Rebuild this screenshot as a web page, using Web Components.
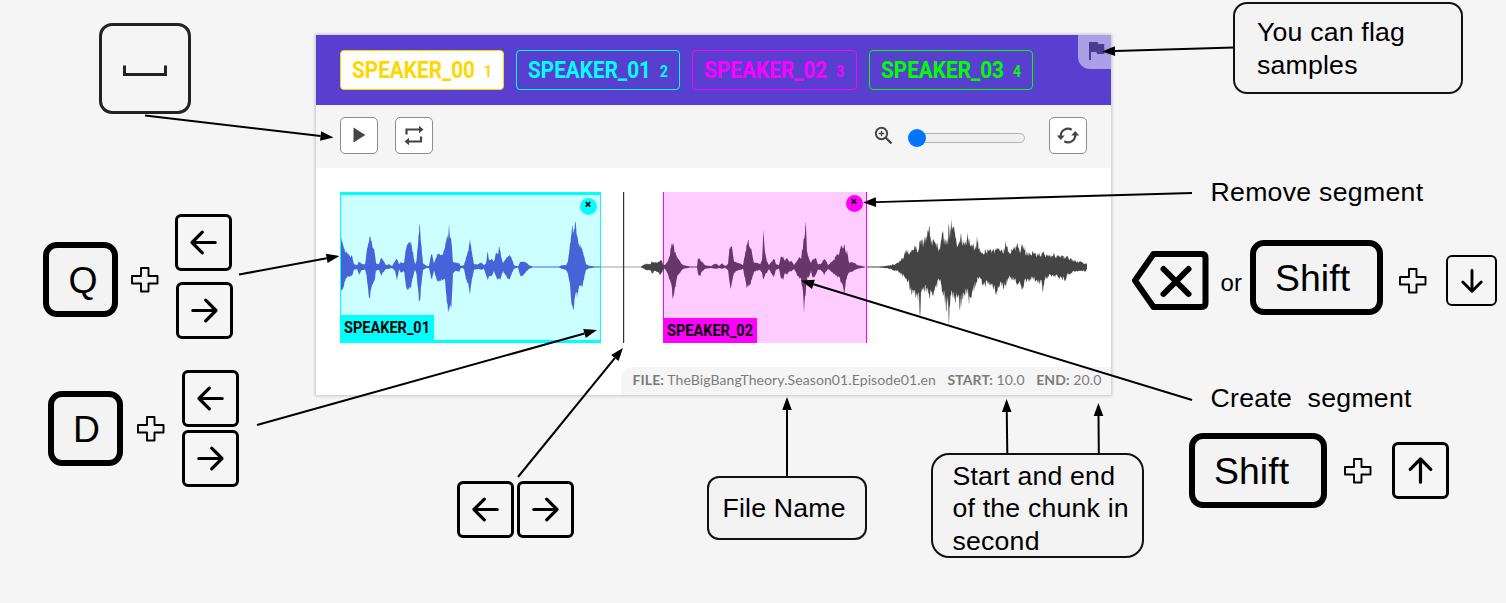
<!DOCTYPE html>
<html lang="en">
<head>
<meta charset="utf-8">
<title>Speaker annotation guide</title>
<style>
html,body{margin:0;background:#f5f5f5;overflow:hidden}
body{width:1506px;height:603px}
</style>
</head>
<body>
<help-canvas></help-canvas>
<script>
function define(name, html, setup) {
  customElements.define(name, class extends HTMLElement {
    connectedCallback() {
      if (this.shadowRoot) return;
      const t = document.createElement('template');
      t.innerHTML = typeof html === 'function' ? html(this) : html;
      this.attachShadow({mode: 'open'}).appendChild(t.content.cloneNode(true));
      if (setup) setup(this.shadowRoot, this);
    }
  });
}

/* Bold condensed lettering: text, size and set width */
define('condensed-text', el => {
  const s = +el.getAttribute('size'), w = +el.getAttribute('width');
  return `<style>:host{display:block;width:${w}px;height:${s}px;flex:none}
  span{display:block;width:max-content;transform-origin:0 0;white-space:nowrap;font:700 ${s}px/${s}px Roboto,sans-serif}</style><span>${el.getAttribute('text')}</span>`;
}, (root, el) => {
  const span = root.querySelector('span');
  span.style.transform = `scaleX(${el.getAttribute('width') / span.getBoundingClientRect().width})`;
});

define('speaker-chip', el => `<style>
:host{display:flex;box-sizing:border-box;width:var(--w,164px);height:40px;border:1.5px solid var(--c);border-radius:4px;color:var(--c);padding:8px 0 0 11px;gap:8.5px;align-items:flex-start}
:host([active]){background:#fff}
.n{padding-top:5px}
</style><condensed-text size="23" width="123" text="${el.getAttribute('name')}"></condensed-text>
<condensed-text class="n" size="16" width="8" text="${el.getAttribute('hotkey')}"></condensed-text>`);

define('tool-button', `<style>
:host{display:flex;box-sizing:border-box;width:38px;height:37px;border:1.5px solid #8c8c8c;border-radius:5px;background:#fff;align-items:center;justify-content:center}
</style><slot></slot>`);

define('zoom-slider', `<style>
:host{display:flex;align-items:center;width:117px;height:18px}
.track{box-sizing:border-box;flex:1;height:9.5px;margin-left:4px;border:1px solid #b2b2b2;border-radius:5px;background:#efefef;display:flex;align-items:center}
.thumb{width:18px;height:18px;border-radius:50%;background:#0075ff;margin-left:-5px;flex:none}
</style><div class="track"><div class="thumb"></div></div>`);

/* Envelope samples: x, height above the axis, depth below it */
const FIRST = [341,29,25,343,25,24,345,17,14,348,15,10,350,11,10,352,12,9,354,3,3,357,2,2,359,6,8,362,3,3,365,3,3,366.5,14,8,368,25,22,369.5,31,36,371,28,26,373,19,17,374.5,17,15,376,4,4,379,3,3,381,10,9,383,8,6,386,2,2,389,3,2,392,1,1,395,6,4,397,9,14,399,3,3,401,5,6,404,4,4,406,21,22,408,25,25,409,28,24,411,26,22,413,15,10,415,3,3,416.5,7,7,418,26,24,419.5,45,39,421,27,22,423,4,3,427,1,1,429,1,1,431,14,11,432,15,13,434,4,4,437,13,14,440,13,15,443,14,14,445,21,12,446.5,28,33,448,32,44,449,45,46,450,34,38,451.5,27,43,453,5,7,456,5,4,459,4,5,461,1,1,464,2,2,466,10,13,468,16,17,470,28,27,472,14,13,474,3,3,478,3,2,481,5,3,484,2,2,486,4,8,487.5,17,14,489,7,10,492,8,9,494,6,5,496,14,10,498,14,13,499.5,23,13,501,12,11,503,4,4,505,8,8,508,11,13,510,13,12,512,8,6,514,2,2,518,0.5,0.5,520,5,9,523,6,10,526,5,5,529,2,2,533,0.4,0.4,559,0.4,0.4,562,2,2,566,2,3,568,6,7,570,23,20,572,41,42,573.5,40,42,575.5,47,29,577,35,30,578.5,25,23,580,22,18,582,20,22,584,12,12,586,3,3,589,1.5,1.5,595,0.5,0.5,600,0.4,0.4];
const SECOND = [600,.4,.4,616,.3,1,625,.3,.5,641,.3,.5,644,3,2,647,4,4,650,3,3,652,6,7,655,5,4,658,6,6,661,8,9,663,3,3,665,2,2,668,7,8,670,14,15,671.5,27,20,672.5,25,33,673.5,24,30,675,16,24,677,11,10,680,6,6,683,2,2,690,.6,.6,697,.4,.4,698,9,8,700,8,10,702,6,5,705,2,2,711,1,1,716,4,2,719,1,1,722,4,2,725,1,1,728,3,3,729.5,21,18,730.5,22,24,732,22,17,734,6,7,737,5,4,740,4,3,743,2,2,745,13,12,746.5,22,20,748,31,20,749.5,23,21,751.5,17,14,754,5,5,757,5,4,760,3,3,762,7,6,763.5,36,14,765,17,9,767,6,6,769,2,2,772,6,8,774,10,10,776,3,3,779,2,2,781,13,12,783,10,13,785,7,7,787,10,8,789,6,5,792,6,4,794,2,2,797,6,8,799,11,12,801,10,12,803,23,28,804,33,46,805,37,35,805.8,52,24,807,18,13,809,9,10,811,5,5,813,8,12,816,9,8,818,3,3,821,3,3,824,9,8,826,7,5,828,2,2,831,5,5,834,8,7,836,12,9,839,15,11,841,21,15,843,19,20,844,25,31,846,15,15,847,18,12,849,5,6,852,5,5,854,5,4,857,2,2,862,1,1,865,.4,.4];
const THIRD = [867,.5,.5,880,.6,.6,888,1.5,1.5,895,3,4,899,5,6,902,9,9,906,19,13,909,17,19,911,18,28,914,22,25,917,20,37,918.5,22,30,920,25,49,921.5,27,25,925,30,26,927,30,24,928.5,50,26,930,32,30,932,30,34,935,31,28,939,20,13,941,30,18,942,46,26,944,33,30,946,26,43,948,30,36,949,52,56,950,36,38,951.5,57,31,953,38,30,955,45,35,957,27,30,960,34,43,962,32,34,964,24,28,966,24,28,967.500,41,31,969,30,38,970,26,34,972,21,27,975,23,20,977.5,31,14,979,20,12,982,18,18,984,17,20,986,17,18,990,20,19,994,18,22,997,19,29,999,18,20,1002,21,19,1004,19,22,1006,29,20,1008,19,13,1011,16,11,1012,24,14,1015,19,14,1017,24,19,1020,19,20,1022,21,25,1024,22,18,1026,16,14,1030,15,14,1034,16,13,1038,13,16,1041,15,16,1043,15,24,1045,12,13,1048,14,12,1050,13,10,1054,14,10,1058,11,11,1062,12,12,1065,10,15,1067,11,9,1070,9,7,1074,7,5,1078,6,5,1082,5,4,1085,4,5,1087,3,2];
function envelope(a, noise) {
  let up = [], down = [], seed = 7;
  const rnd = () => (seed = (seed * 16807) % 2147483647) / 2147483647;
  let i = 0;
  for (let x = a[0]; x <= a[a.length - 3]; x += .5) {
    while (i < a.length - 6 && a[i + 3] < x) i += 3;
    const f = (x - a[i]) / (a[i + 3] - a[i]);
    const u = a[i + 1] + (a[i + 4] - a[i + 1]) * f, d = a[i + 2] + (a[i + 5] - a[i + 2]) * f;
    up.push(x.toFixed(2) + ' ' + (75 - Math.max(.4, u * (1 + noise * (.2 - rnd())))).toFixed(2));
    down.unshift(x.toFixed(2) + ' ' + (75 + Math.max(.4, d * (1 + noise * (.2 - rnd())))).toFixed(2));
  }
  return 'M' + up.concat(down).join('L') + 'Z';
}

define('wave-region', el => `<style>
:host{display:flex;box-sizing:border-box;position:absolute;top:0;height:151px;align-items:flex-end;background:var(--fill);border:solid var(--c);border-width:var(--bw)}
.label{display:flex;box-sizing:border-box;width:92.500px;height:var(--lh);background:var(--c);padding:var(--lp) 0 0 3px;margin-bottom:var(--mb,0);color:#000}
.x{position:absolute;right:var(--xr);top:var(--xt);width:17px;height:17px;border-radius:50%;background:var(--c)}
.x svg{display:block}
</style><div class="label"><condensed-text size="16" width="86" text="${el.getAttribute('name')}"></condensed-text></div>
<div class="x"><svg width="17" height="17"><path d="M5.7 4l4.6 4.600M10.300 4l-4.600 4.600" stroke="#000" stroke-width="1.700"/></svg></div>`);

define('wave-form', `<style>
:host{display:block;position:relative;width:747px;height:151px}
svg{position:absolute;left:0;top:0;overflow:visible}
.a{left:0;width:261px;--c:#0ff;--fill:#cff;--bw:3px 1.300px;--lh:28.500px;--lp:5px;--mb:-3px;--xr:3px;--xt:3px}
.b{left:323px;width:204px;--c:#f0f;--fill:#fcf;--bw:0 1.300px;--lh:25px;--lp:5px;--xr:3px;--xt:3px}
</style>
<wave-region class="a" name="SPEAKER_01"></wave-region>
<wave-region class="b" name="SPEAKER_02"></wave-region>
<svg width="747" height="151" viewBox="340 0 747 151"><path id="w1" fill="#4664d8"/><path id="w2" fill="#444"/><path id="w2b" fill="#693669"/><path id="w3" fill="#444"/><path d="M623.600 0v151" stroke="#333" stroke-width="1.200"/></svg>`,
root => {
  const q = id => root.getElementById(id);
  const quiet = SECOND.indexOf(641), cut = SECOND.indexOf(665);
  q('w1').setAttribute('d', envelope(FIRST, .2));
  q('w2').setAttribute('d', 'M600 74.700h42v.6h-42z' + envelope(SECOND.slice(quiet, cut + 3), .4));
  q('w2b').setAttribute('d', envelope(SECOND.slice(cut), .25));
  q('w3').setAttribute('d', envelope(THIRD, .4));
});

define('audio-panel', `<style>
:host{display:flex;flex-direction:column;box-sizing:border-box;width:795px;height:360px;background:#fff;box-shadow:0 0 3px 1px rgba(0,0,0,.2);font-family:Lato,sans-serif}
header{display:flex;gap:12px;height:70px;box-sizing:border-box;padding:15px 0 0 24px;background:#583fcf;position:relative;flex:none}
.flag{position:absolute;right:0;top:0;width:33px;height:34px;border-bottom-left-radius:12px;background:#ab9fe7}
.flag svg{display:block}
nav{display:flex;align-items:flex-start;box-sizing:border-box;height:63px;padding:12px 24px 0 23.500px;background:#f5f5f5;flex:none}
nav .loop{margin-left:17.500px}.mag{margin:9px 15px 0 auto}zoom-slider{margin:12px 24.500px 0 0}
main{padding:24px 0 0 24px;height:175px;flex:1;box-sizing:border-box}
footer{display:flex;align-self:flex-end;box-sizing:border-box;width:490px;height:28px;padding:0 12.500px 0 11.500px;border-top-left-radius:12px;background:#f5f5f5;gap:11.500px;align-items:flex-start;color:#7b7b7b;font-size:14px;line-height:26px;letter-spacing:.1px;white-space:nowrap}
b{font-weight:700}
</style>
<header>
<speaker-chip active name="SPEAKER_00" hotkey="1" style="--c:#ffd700"></speaker-chip>
<speaker-chip name="SPEAKER_01" hotkey="2" style="--c:#0ff"></speaker-chip>
<speaker-chip name="SPEAKER_02" hotkey="3" style="--c:#f0f;--w:165px"></speaker-chip>
<speaker-chip name="SPEAKER_03" hotkey="4" style="--c:#0f0"></speaker-chip>
<div class="flag"><svg width="33" height="34"><path d="M11 7h8.500l.8 2h6v10h-7l-.9-2H13v8h-2z" fill="#4b3c91"/></svg></div>
</header>
<nav>
<tool-button><svg width="20" height="20"><path d="M4.500 1.500v15L16.300 9z" fill="#444"/></svg></tool-button>
<tool-button class="loop"><svg width="20" height="20" viewBox="0 1 20 20" fill="none" stroke="#444" stroke-width="2.200"><path d="M2.500 9.500V4.500h14M17 11.500v5H4"/><path d="M15 .8l4.500 3.700L15 8.200zM5 12.800L.5 16.500 5 20.200z" fill="#444" stroke="none"/></svg></tool-button>
<svg class="mag" width="19" height="19" fill="none" stroke="#444"><circle cx="7.500" cy="7.500" r="5.700" stroke-width="1.900"/><path d="M4.700 7.500h5.600M7.500 4.700v5.600" stroke-width="1.300"/><path d="M11.500 11.500l6 6" stroke-width="2.300"/></svg>
<zoom-slider></zoom-slider>
<tool-button><svg width="24" height="20" viewBox="0 1 24 20" fill="none" stroke="#444" stroke-width="2.200"><path d="M4.700 11a7.300 7.300 0 0 1 11-6.300M19.300 10a7.300 7.300 0 0 1-11 6.300"/><path d="M.8 10.500h8l-4 4.500zM23.200 10.500h-8l4-4.500z" fill="#444" stroke="none"/></svg></tool-button>
</nav>
<main><wave-form></wave-form></main>
<footer><span><b>FILE:</b> TheBigBangTheory.Season01.Episode01.en</span><span><b>START:</b> 10.0</span><span><b>END:</b> 20.0</span></footer>`);

define('key-cap', `<style>
:host{display:block;box-sizing:border-box;border:6px solid #000;border-radius:14px;background:#f3f3f3;font:37.330px/43px "Liberation Sans",Arial,sans-serif;color:#000;white-space:nowrap}
</style><slot></slot>`);

define('arrow-key', el => `<style>
:host{display:flex;box-sizing:border-box;width:57px;height:57px;border:3px solid #000;border-radius:6px;align-items:center;justify-content:center}
:host([small]){width:51px;height:51px;border-width:2.500px}
svg{flex:none;transform:rotate(${{left: 0, up: 90, right: 180, down: -90}[el.getAttribute('dir')]}deg)}
:host([small]) svg{width:26px;height:26px}
</style><svg width="29" height="29" viewBox="0 0 29 29" fill="none" stroke="#000" stroke-width="3.200" stroke-linecap="round" stroke-linejoin="round"><path d="M26.200 14.500H3M13.300 4.200L3 14.500l10.300 10.300"/></svg>`);

define('plus-sign', `<style>:host{display:block;width:28px;height:26px}svg{display:block}</style>
<svg width="28" height="26"><path d="M10 1h7.500v8h9v7.500h-9v8H10v-8H1V9h9z" fill="#f3f3f3" stroke="#000" stroke-width="1.900" stroke-linejoin="round"/></svg>`);

define('note-box', `<style>
:host{display:block;box-sizing:border-box;border:2px solid #111;border-radius:14px;background:#f3f3f3;font:26.670px/32.500px "Liberation Sans",Arial,sans-serif;letter-spacing:.2px;color:#000;white-space:pre}
:host([plain]){border:0;background:none}
</style><slot></slot>`);

define('arrow-lines', `<style>:host{display:block;position:absolute;left:0;top:0}svg{display:block}</style>
<svg width="1506" height="603"></svg>`, root => {
  const list = [[145,115.5,333.5,137.5],[239,274.5,339.5,256],[257,425,597,330],[518,477,623,348],[787,476,787,397],[1007.3,454,1006.6,399],[1098.8,454,1098.4,403],[1192,193,863,202.5],[1192,400,801,280.5],[1234,47.5,1102,51.5]];
  root.querySelector('svg').innerHTML = list.map(([a, b, c, d]) => {
    const n = Math.hypot(c - a, d - b), u = (c - a) / n, v = (d - b) / n, x = c - 13 * u, y = d - 13 * v;
    return `<path d="M${a} ${b}L${x} ${y}" stroke="#000" stroke-width="2"/><path d="M${c} ${d}L${x - 4.8 * v} ${y + 4.8 * u}L${x + 4.8 * v} ${y - 4.8 * u}Z"/>`;
  }).join('');
});

/* Free canvas holding the panel, its notes and the keys */
const at = (x, y, w, h, more = '') => `style="left:${x}px;top:${y}px;${w ? `width:${w}px;height:${h}px;` : ''}${more}"`;
define('help-canvas', `<style>
:host{display:block;position:relative;width:1506px;height:603px;overflow:hidden;background:#f5f5f5}
audio-panel,key-cap,arrow-key,plus-sign,note-box,.ico{position:absolute}
</style>
<audio-panel ${at(316, 35)}></audio-panel>
<key-cap ${at(99, 23, 92, 91, 'border:3px solid #222;border-radius:13px;background:none')}><svg width="86" height="85" style="display:block"><path d="M22.500 39.500v9h41v-9" fill="none" stroke="#222" stroke-width="3"/></svg></key-cap>
<key-cap ${at(43, 242, 75, 75, 'padding:11px 0 0 19.500px')}>Q</key-cap>
<key-cap ${at(48, 391, 75, 75, 'padding:10.500px 0 0 19px')}>D</key-cap>
<plus-sign ${at(131, 267)}></plus-sign><plus-sign ${at(137, 415.5)}></plus-sign>
<arrow-key dir="left" ${at(175, 214)}></arrow-key><arrow-key dir="right" ${at(176, 282)}></arrow-key>
<arrow-key dir="left" ${at(182, 370)}></arrow-key><arrow-key dir="right" ${at(182, 430)}></arrow-key>
<arrow-key dir="left" ${at(457, 481)}></arrow-key><arrow-key dir="right" ${at(517, 481)}></arrow-key>
<note-box ${at(1233, 2, 230, 92, 'padding:12px 0 0 22px')}>You can flag
samples</note-box>
<note-box ${at(707, 475.5, 160, 64.5, 'border-radius:12px;padding:14px 0 0 13.500px')}>File Name</note-box>
<note-box ${at(931, 453, 213, 105, 'border-radius:18px;padding:4.500px 0 0 19.500px')}>Start and end
of the chunk in
second</note-box>
<note-box plain ${at(1210.5, 175.5, 0, 0, 'letter-spacing:.28px')}>Remove segment</note-box>
<note-box plain ${at(1210.5, 381.5, 0, 0, 'letter-spacing:.28px')}>Create  segment</note-box>
<svg class="ico" ${at(1130, 248, 82, 66)} viewBox="1130 248 82 66" fill="none" stroke="#000" stroke-width="6"><path d="M1153.500 254h48q4 0 4 4v45q0 4-4 4h-48L1135 280.500z" stroke-linejoin="round"/><path d="M1163.500 269l25 25M1188.500 269l-25 25" stroke-linecap="round"/></svg>
<note-box plain ${at(1220.5, 266.5, 0, 0, 'font-size:24px')}>or</note-box>
<key-cap ${at(1250, 240, 133, 75, 'padding:11px 0 0 19px;letter-spacing:.1px')}>Shift</key-cap>
<plus-sign ${at(1399, 268)}></plus-sign><arrow-key small dir="down" ${at(1446, 255)}></arrow-key>
<key-cap ${at(1189, 433, 138, 75, 'padding:11px 0 0 19px;letter-spacing:.1px')}>Shift</key-cap>
<plus-sign ${at(1344, 458)}></plus-sign><arrow-key dir="up" ${at(1392, 442)}></arrow-key>
<arrow-lines></arrow-lines>`);
</script>
</body>
</html>
